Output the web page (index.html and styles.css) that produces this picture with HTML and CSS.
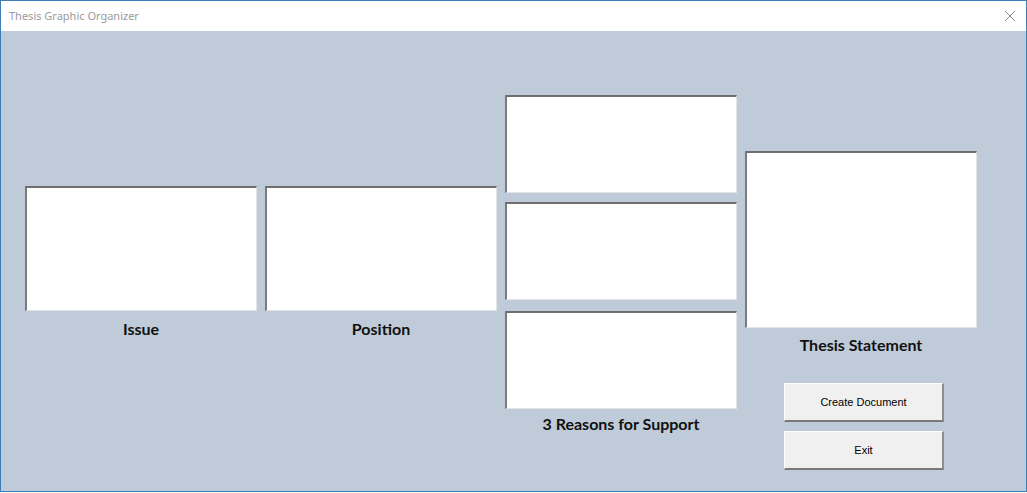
FILE: index.html
```html
<!DOCTYPE html>
<html lang="en">
<head>
    <meta charset="UTF-8">
    <meta name="viewport" content="width=device-width, initial-scale=1.0">
    <title>Thesis Graphic Organizer</title>
    <link rel="stylesheet" href="styles.css">
</head>
<body>
<div class="window">
    <div class="title-bar">
        <span class="title">Thesis Graphic Organizer</span>
        <svg class="close" width="12" height="12" viewBox="0 0 12 12">
            <path d="M1 1 L11 11 M11 1 L1 11" stroke="#8a8a8a" stroke-width="1" fill="none"/>
        </svg>
    </div>

    <div class="form-body">
        <div class="column col-issue">
            <textarea class="field field-main"></textarea>
            <div class="label">Issue</div>
        </div>

        <div class="column col-position">
            <textarea class="field field-main"></textarea>
            <div class="label">Position</div>
        </div>

        <div class="column col-reasons">
            <textarea class="field field-reason"></textarea>
            <textarea class="field field-reason second"></textarea>
            <textarea class="field field-reason third"></textarea>
            <div class="label label-reasons">3 Reasons for Support</div>
        </div>

        <div class="column col-thesis">
            <textarea class="field field-thesis"></textarea>
            <div class="label label-thesis">Thesis Statement</div>
            <div class="buttons">
                <button type="button">Create Document</button>
                <button type="button">Exit</button>
            </div>
        </div>
    </div>
</div>
</body>
</html>
```

FILE: styles.css
```css
body {
    margin: 0;
    padding: 0;
    width: 1027px;
    height: 493px;
    overflow: hidden;
    background: #ffffff;
}

.window {
    box-sizing: border-box;
    width: 1027px;
    height: 492px;
    border: 1px solid #3b7fb6;
    display: flex;
    flex-direction: column;
}

.title-bar {
    height: 30px;
    background: #ffffff;
    display: flex;
    align-items: center;
    justify-content: space-between;
    padding: 0 10px 0 8px;
    flex-shrink: 0;
}

.title {
    font-family: "Noto Sans", "Open Sans", sans-serif;
    font-size: 11px;
    color: #9b9b9b;
    margin-top: -1px;
}

.form-body {
    flex: 1;
    background: #bfcbd8;
    display: flex;
    align-items: flex-start;
    gap: 8px;
    padding-left: 24px;
}

.column {
    width: 232px;
    display: flex;
    flex-direction: column;
    align-items: center;
}

.col-issue,
.col-position {
    margin-top: 155px;
}

.col-reasons {
    margin-top: 64px;
}

.col-thesis {
    margin-top: 120px;
}

.field {
    box-sizing: border-box;
    width: 232px;
    margin: 0;
    padding: 0;
    resize: none;
    background: #ffffff;
    border-style: solid;
    border-width: 2px 1px 1px 2px;
    border-color: #6e6e6e #e4e4e4 #e4e4e4 #7a7a7a;
    outline: none;
    display: block;
}

.field-main {
    height: 125px;
}

.field-reason {
    height: 98px;
}

.field-reason.second {
    margin-top: 9px;
}

.field-reason.third {
    margin-top: 11px;
}

.field-thesis {
    height: 177px;
}

.label {
    font-family: Lato, "Open Sans", sans-serif;
    font-weight: bold;
    font-size: 16px;
    line-height: 20px;
    color: #111111;
    margin-top: 8px;
}

.label-reasons {
    margin-top: 5px;
}

.label-thesis {
    margin-top: 7px;
}

.buttons {
    display: flex;
    flex-direction: column;
    gap: 9px;
    margin-top: 28px;
    margin-left: 6px;
}

button {
    box-sizing: border-box;
    width: 160px;
    height: 39px;
    background: #f0f0f0;
    border-style: solid;
    border-width: 1px 2px 2px 1px;
    border-color: #ffffff #8d8d8d #7a7a7a #ffffff;
    font-family: "Liberation Sans", Arial, sans-serif;
    font-size: 11px;
    color: #000000;
    padding: 0;
    cursor: pointer;
}
```
